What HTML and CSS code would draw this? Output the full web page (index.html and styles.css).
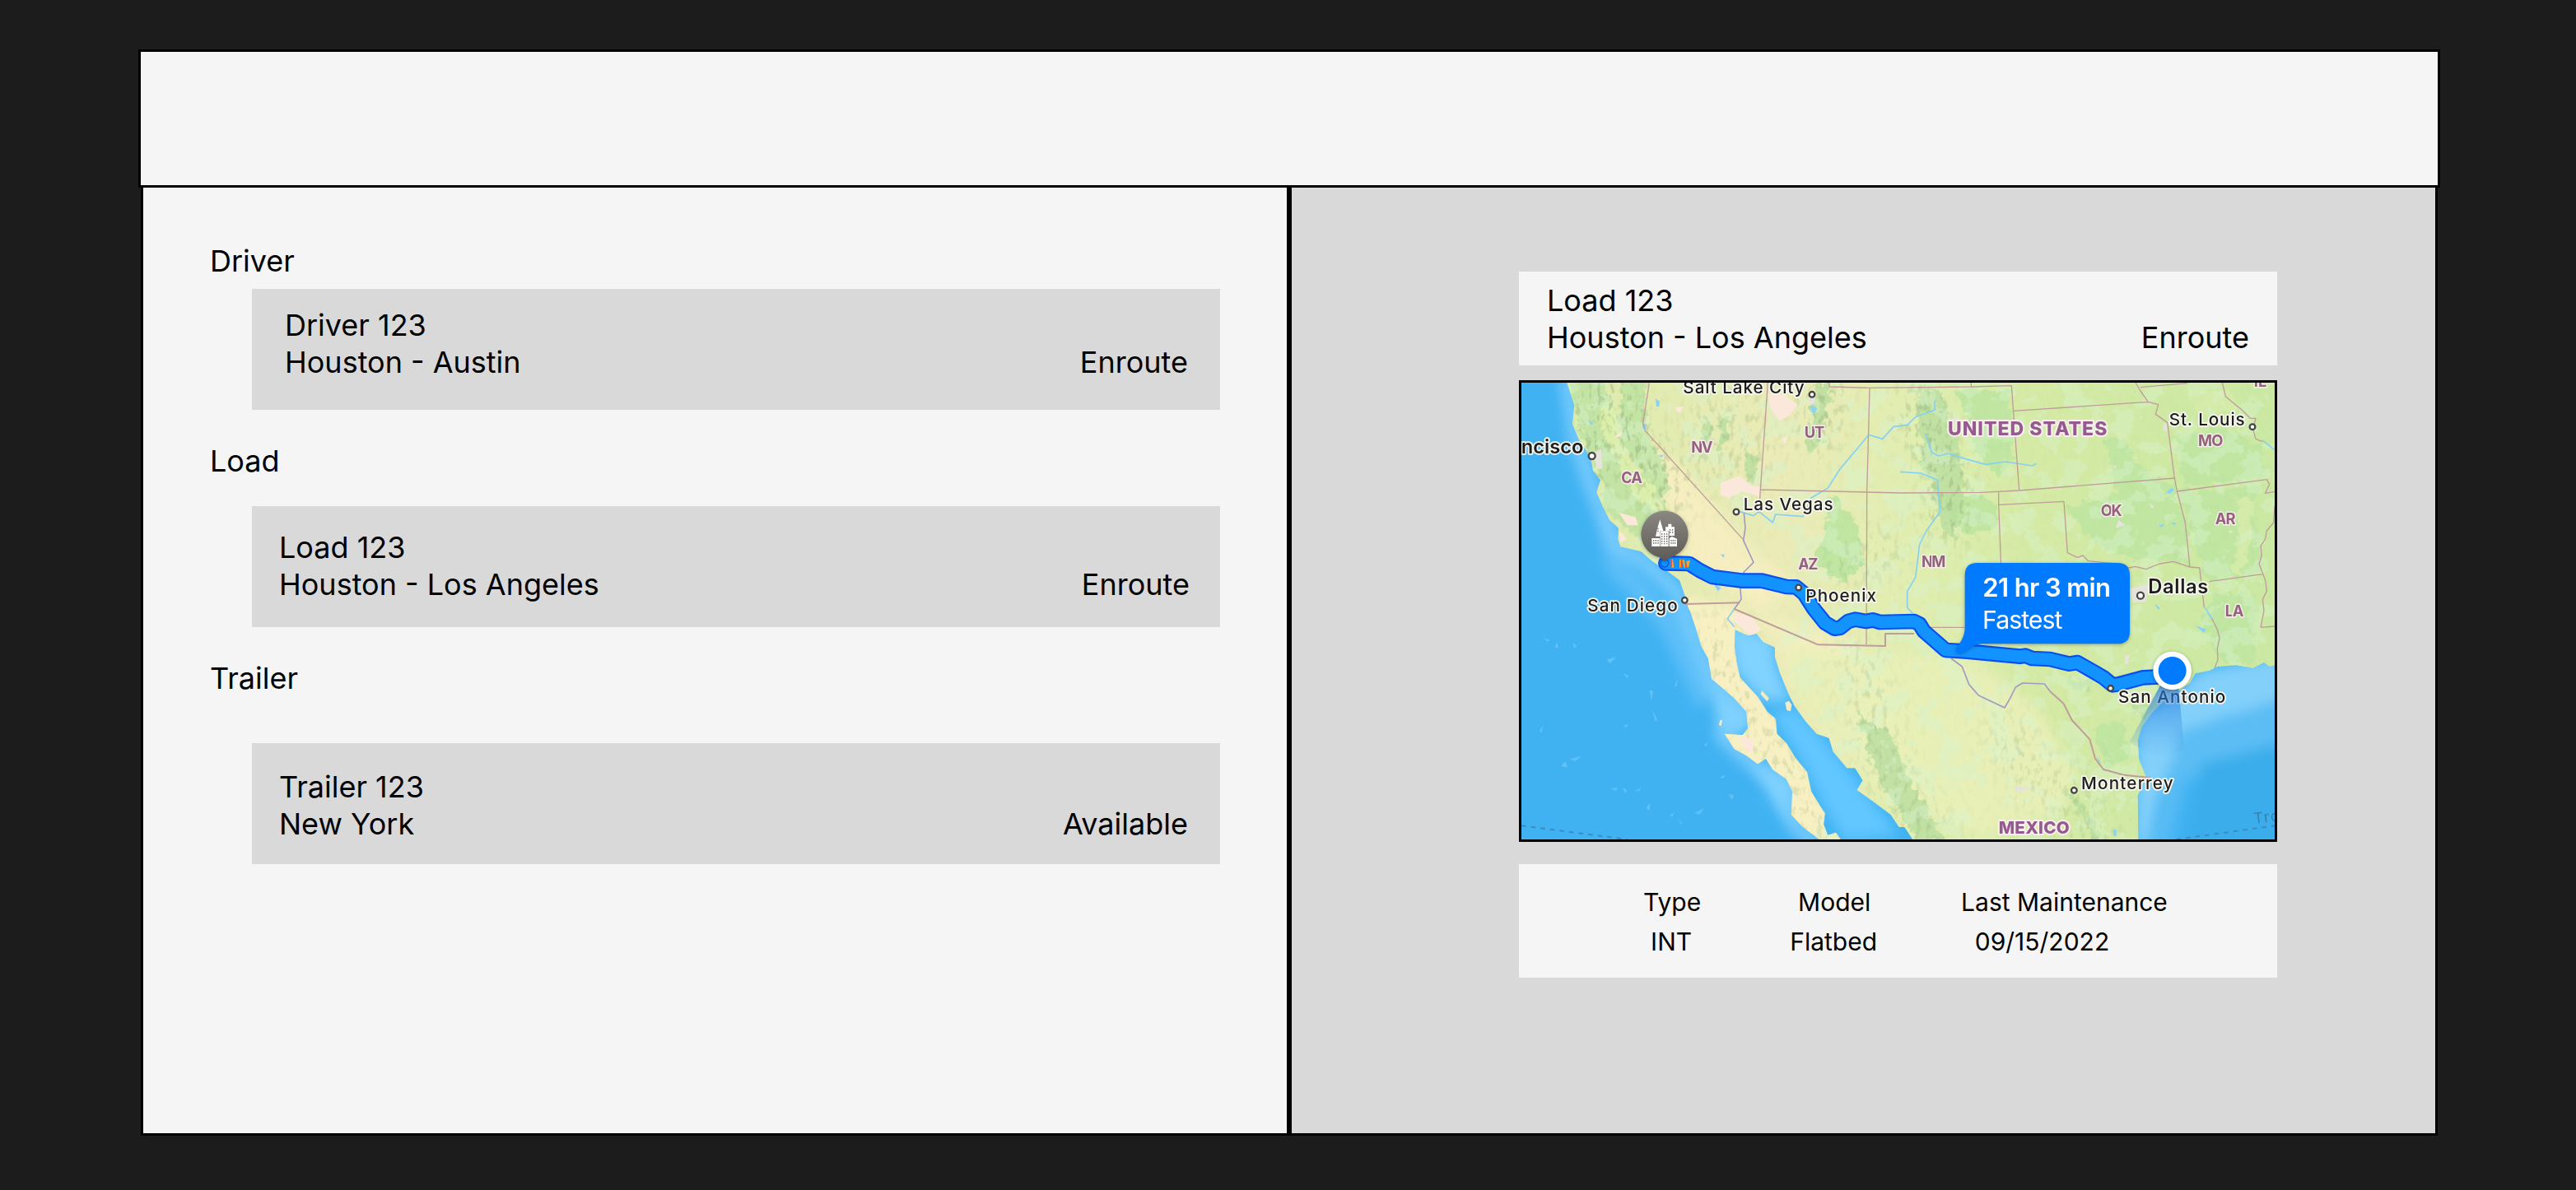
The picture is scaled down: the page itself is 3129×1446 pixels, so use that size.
FILE: index.html
```html
<!DOCTYPE html>
<html lang="en">
<head>
<meta charset="utf-8">
<title>Dispatch</title>
<link rel="stylesheet" href="styles.css">
</head>
<body>
<header class="topbar"></header>
<main class="panels">
  <section class="panel list-panel">
    <h2 class="group-title driver-title">Driver</h2>
    <article class="card driver-card">
      <div><p>Driver 123</p><p>Houston - Austin</p></div>
      <p class="status">Enroute</p>
    </article>
    <h2 class="group-title load-title">Load</h2>
    <article class="card load-card">
      <div><p>Load 123</p><p>Houston - Los Angeles</p></div>
      <p class="status">Enroute</p>
    </article>
    <h2 class="group-title trailer-title">Trailer</h2>
    <article class="card trailer-card">
      <div><p>Trailer 123</p><p>New York</p></div>
      <p class="status">Available</p>
    </article>
  </section>
  <section class="panel detail-panel">
    <article class="detail-head">
      <div><p>Load 123</p><p>Houston - Los Angeles</p></div>
      <p class="status">Enroute</p>
    </article>
    <div class="map">
      <svg class="map-art" viewBox="24 30 2745 1665" preserveAspectRatio="none">
        <defs>
          <path id="land" d="M190 30L200 60 217 110 210 180 235 240 262 280 280 320 285 350 312 385 298 430 320 480 345 530 378 560 376 600 385 628 460 645 500 680 530 700 560 720 600 750 625 820 632 850 640 865 660 925 680 990 705 1035 718 1110 765 1150 800 1180 845 1230 850 1290 830 1315 765 1310 800 1365 845 1390 885 1420 915 1400 940 1440 990 1475 1012 1520 1008 1605 1050 1650 1110 1695H1187L1170 1670 1140 1680 1125 1640 1130 1600 1110 1570 1080 1520 1065 1450 1040 1420 1020 1395 990 1345 955 1310 950 1255 920 1230 885 1175 820 1105 808 1050 800 990 802 930 850 952 880 945 905 975 948 995 948 1030 965 1085 1000 1170 1020 1210 1060 1265 1100 1310 1145 1325 1160 1375 1210 1435 1240 1435 1268 1480 1247 1515 1310 1560 1370 1605 1400 1650 1420 1650 1450 1695H2272L2270 1535 2300 1465 2275 1405 2270 1335 2285 1285 2320 1235 2350 1205 2390 1175 2460 1125 2480 1090 2530 1080 2560 1065 2630 1060 2690 1070 2730 1050 2750 1065 2769 1060V30Z"/>
          <clipPath id="landClip"><use href="#land"/></clipPath>
          <linearGradient id="landFill" x1="0" y1="0" x2="1" y2="0">
            <stop offset="0" stop-color="#dcebab"/><stop offset=".3" stop-color="#ebebb7"/><stop offset=".5" stop-color="#e0eeb0"/><stop offset=".65" stop-color="#d5eaa5"/><stop offset="1" stop-color="#cbe9a3"/>
          </linearGradient>
          <filter id="soft" x="-20%" y="-20%" width="140%" height="140%"><feGaussianBlur stdDeviation="22"/></filter>
          <filter id="wide" x="-50%" y="-50%" width="200%" height="200%"><feGaussianBlur stdDeviation="55"/></filter>
          <filter id="patches" x="0" y="0" width="100%" height="100%">
            <feTurbulence type="fractalNoise" baseFrequency=".011 .012" numOctaves="5" seed="7"/>
            <feColorMatrix values="0 0 0 0 .69  0 0 0 0 .89  0 0 0 0 .61  22 0 0 0 -11.8"/>
          </filter>
          <filter id="relief" x="0" y="0" width="100%" height="100%" color-interpolation-filters="sRGB">
            <feTurbulence type="fractalNoise" baseFrequency=".05 .028" numOctaves="3" seed="4"/>
            <feColorMatrix values="0 0 0 0 .5  0 0 0 0 .62  0 0 0 0 .42  0 0 5 0 -2.6"/>
          </filter>
          <filter id="jagged" x="-5%" y="-5%" width="110%" height="110%">
            <feTurbulence type="fractalNoise" baseFrequency=".03" numOctaves="3" seed="2"/>
            <feDisplacementMap in="SourceGraphic" scale="55" xChannelSelector="R" yChannelSelector="G"/>
            <feGaussianBlur stdDeviation="2"/>
          </filter>
          <mask id="inland"><rect x="24" y="30" width="2745" height="1665" fill="#fff"/><path filter="url(#soft)" fill="#222" d="M480 250L600 330 830 560 1080 700 1080 800 960 940 1040 1200 1180 1400 1100 1695 600 1400 570 700Z"/></mask>
          <mask id="ranges">
            <rect x="24" y="30" width="2745" height="1665" fill="#0c0c0c"/>
            <g filter="url(#wide)" fill="none" stroke="#fff" stroke-linecap="round" stroke-linejoin="round">
              <path stroke-width="110" d="M330 30L460 260 560 480M240 160L300 360M1480 80L1500 240 1580 380 1580 560M1130 60L1100 240"/>
              <path stroke-width="150" stroke="#777" d="M700 160V340M850 100V340M1250 1050L1380 1500 1520 1680M2020 1500L2110 1695M1800 1300L1900 1500M720 950L960 1400 1100 1640M1200 700L1360 640"/>
            </g>
          </mask>
          <linearGradient id="pinFill" x1="0" y1="0" x2="0" y2="1"><stop offset="0" stop-color="#8b8883"/><stop offset="1" stop-color="#5d5a56"/></linearGradient>
          <linearGradient id="beam" x1="0" y1="0" x2="0" y2="1"><stop offset="0" stop-color="#1a6fd8" stop-opacity=".8"/><stop offset=".35" stop-color="#2a80e0" stop-opacity=".5"/><stop offset="1" stop-color="#3f9bec" stop-opacity="0"/></linearGradient>
        </defs>

        <!-- water -->
        <rect x="24" y="30" width="2745" height="1665" fill="#40b2f2"/>
        <g filter="url(#soft)" fill="none" stroke="#7fcfff" stroke-linejoin="round">
          <path stroke-width="60" opacity=".8" d="M190 0L225 240 285 420 370 620 470 680 590 790 660 960 720 1120 850 1230 760 1320 880 1430 1000 1500 1020 1640 1110 1720"/>
          <path stroke-width="80" opacity=".45" d="M330 500L370 700 560 900 700 1200"/>
        </g>
        <g filter="url(#soft)">
          <path fill="#80d2ff" d="M770 900L940 960 960 1080 1010 1190 900 1190 800 1080ZM720 1130L850 1230 850 1290 740 1310ZM870 1420L1000 1480 1010 1650 940 1560Z"/>
          <path fill="#62c6ff" d="M930 1230L1030 1220 1160 1370 1260 1500 1400 1680 1200 1700 1130 1580 1040 1400Z"/>
          <path fill="#83d0fa" d="M2270 1250L2400 1170 2500 1080 2800 1030V1200L2560 1250 2420 1340 2340 1560 2310 1720H2260Z"/>
          <path fill="#5cbdf4" d="M2420 1300L2800 1180V1360L2440 1480 2380 1720H2330Z"/>
          <path fill="#3badeb" d="M2500 1420L2800 1340V1720H2440Z"/>
        </g>
        <g fill="#77cbf8" opacity=".6">
          <path d="M105 960l22 8-8 7zM152 976l8 20h-14zM212 978l14 12-10 8zM335 1040l34-10-22 24zM395 1090l20 8-6 10zM490 1150l14 4-6 38zM395 1280l18-6-6 14zM168 1428l16-18 8 22zM200 1402l42-10-22 18zM348 1510l28-4-8 12zM392 1506l18 10-8 10zM438 1518l24-12-8 12zM655 1600l36-20-18 24zM565 1606l16-10-8 18zM478 1580l16-18-4 28zM594 1618l16 18-4 4zM746 1472l18-14v12zM778 1530l20 4-8 16zM690 1350l12-10-4 18zM90 1300l12-20-4 26zM500 1220l20 40-8 4zM580 1140l14-32-4 26z"/>
        </g>

        <!-- land and terrain -->
        <use href="#land" fill="url(#landFill)"/>
        <g clip-path="url(#landClip)">
          <g filter="url(#soft)">
            <path fill="#f6eec0" d="M480 250L600 330 830 600 1030 780 900 860 640 700 570 560Z"/>
            <path fill="#f8f0c2" d="M590 800L820 850 840 960 960 1230 1200 1695H1000L960 1500 720 1400 620 1000Z"/>
            <path fill="#f4efc0" opacity=".8" d="M860 850L1270 985 1000 1160 960 1000ZM1060 1230L1180 1340 1200 1420 1120 1310Z"/>
            <path fill="#e9f0b8" opacity=".9" d="M1000 1000L1650 1030 1900 1200 2050 1450 2000 1600 1700 1695 1300 1500 1000 1150Z"/>
          </g>
          <g filter="url(#jagged)">
            <path fill="#bee3a2" opacity=".85" d="M190 10H320L350 110 330 240 420 420 500 490 560 480 590 560 500 620 400 560 310 480 320 400 250 250ZM380 20H480L470 180 560 380 540 480 470 380 380 220Z"/>
            <path fill="#dcefaa" d="M330 100L370 130 370 200 430 340 500 400 520 510 430 440 350 270 310 190Z"/>
            <path fill="#c0e6a2" d="M2150 230L2230 250 2300 360 2400 400 2450 560 2450 690 2300 680 2160 640 2060 560 2010 480 2200 440 2170 330ZM2420 430L2740 400 2680 460 2720 600 2720 720 2520 760ZM2400 230L2560 190 2720 260 2730 380 2440 410ZM2110 1290L2210 1260 2250 1400 2150 1440ZM2560 800H2700V1040L2580 1050 2500 900ZM1160 440L1240 540 1270 690 1200 760 1090 690ZM1600 50L1800 60 1820 300 1760 380 1680 280 1640 150ZM1560 440L1740 450 1760 560 1640 580 1580 540Z"/>
            <path fill="#b9dd9f" opacity=".8" d="M1470 60H1560L1620 300 1640 400 1600 600 1560 560 1480 300ZM1100 30H1150L1120 240 1070 300 1060 240ZM1240 1230L1380 1320 1440 1480 1500 1560 1560 1695H1460L1330 1480ZM2020 1520L2060 1540 2140 1695H2110ZM840 260L880 300 870 400 840 380ZM750 150L780 150 770 260 740 280ZM690 170L720 180 700 280 670 260ZM2020 1105L2100 1110 2100 1150 2030 1150ZM2240 1210L2330 1190 2290 1260Z"/>
            <path fill="#d5ebaa" d="M2630 450L2690 460 2680 600 2650 740 2610 720 2640 600ZM2440 60L2600 50 2640 130 2500 150Z"/>
          </g>
          <g mask="url(#inland)"><rect x="24" y="30" width="2745" height="1665" filter="url(#patches)" opacity=".42"/></g>
          <g mask="url(#ranges)"><rect x="24" y="30" width="2745" height="1665" filter="url(#relief)" opacity=".5"/></g>
          <g fill="#fbe8da">
            <path d="M925 70L985 75 1030 110 1000 150 965 170 930 120ZM750 395L820 370 860 405 895 410 890 445 830 425 780 450 750 440ZM800 870L860 880 900 930 860 955 800 900ZM380 505L440 520 450 550 410 550ZM380 570L410 600 385 612ZM820 1320L870 1330 865 1385 830 1350ZM580 120L615 118 600 142ZM360 230L390 205 388 225ZM975 235L995 222 985 260Z"/>
          </g>
          <g fill="#e6e3dc">
            <path d="M285 290L315 270 320 345 300 340ZM1070 80L1095 85 1090 110 1075 105ZM1590 160L1615 155 1610 180ZM2200 530L2225 550 2190 560ZM2240 780L2310 765 2300 830 2250 830ZM2365 180H2378V205H2362ZM2225 1025L2240 1020 2235 1055 2222 1060ZM2310 470L2330 480 2322 490ZM2600 570h18l-8 10zM2180 330l14 4-4 10zM1820 1500l60 8-20 10-34 2z"/>
          </g>
          <path fill="#86d2fb" d="M512 88l16 10-2 20-10-2zM466 178l14 4-4 18-10-4zM268 165l18 14-10 4zM525 295l18-2-8 10zM1080 115l22 8-12 20-8-6zM750 655l14 2-4 12zM726 765l26 12-12 14zM2375 430l16-16 12 6-16 14zM2345 550l22-4-8 12zM2395 540l16 2-10 8zM2330 835l22 18-8 4zM2480 915l40 14-10 12zM2180 1660h12v22h-10zM2120 1390l12 18v12z"/>
        </g>
        <path fill="#f5ebbf" d="M900 1152l26 28-6 12-24-26zM985 1196l14-6 10 14-4 24-14-4zM748 1260h8l-4 22-8-4z"/>

        <!-- rivers -->
        <g class="river">
          <path d="M820 500L870 515 890 500 940 540 950 510 1050 518 1080 450 1140 415 1185 345 1240 280 1290 220 1340 235 1380 190 1430 185 1460 155 1530 130V95"/>
          <path d="M1495 215L1520 285 1545 297 1580 288 1640 307 1715 328 1790 318 1885 333 1900 325"/>
          <path d="M1405 355L1480 360 1540 385 1550 500 1500 570 1475 620 1460 740 1430 790V850L1450 870"/>
          <path d="M800 855L775 890 800 920M2515 850L2540 890M2725 240L2769 275"/>
        </g>
        <!-- state and national borders -->
        <g class="border">
          <path d="M490 30L467 180 475 205 835 605M922 30L895 420 890 505M895 420L1410 432 1700 430 1838 423 2404 378M1145 30L1147 45 1293 49 1283 432 1281 985M1293 49L1663 45 1810 41 1838 423M1663 30V45M1818 133L2308 100M2262 30L2280 60 2308 100 2345 110 2335 145 2378 175 2404 378 2413 425 2443 540 2460 702 2495 705 2512 850M2280 47L2450 32M2413 426L2740 383 2750 400 2735 433 2769 427M1763 430V475L1772 700M1763 475L2001 463 2014 650 2050 667 2070 660 2090 680 2140 685 2200 690 2240 705 2260 700 2300 710 2350 690 2400 682 2460 702M2530 755L2725 728M1510 922H1640M2718 922L2769 918"/>
          <path d="M2769 480L2765 540 2740 570 2735 600 2718 625 2722 660 2712 690 2735 750 2740 790 2725 820 2730 860 2718 922M2540 890L2560 930 2568 960 2560 1000 2562 1040 2550 1070M2578 30L2590 80 2650 130 2680 160 2700 160 2690 200 2700 235 2725 245"/>
          <path stroke-width="6" d="M620 837L820 832M800 855L1105 985 1350 990V945H1455M1950 1155L2000 1200 2030 1260 2095 1330 2115 1400 2145 1440 2220 1460 2315 1470"/>
        </g>
        <path class="border river-border" d="M835 505L840 560 833 605 870 685 835 720 820 760 825 820 800 855M1590 1035L1630 1065 1655 1130 1690 1170 1785 1215 1805 1180 1825 1140 1850 1125 1930 1128 1950 1155"/>
        <path class="tropic" d="M24 1645L410 1695M2410 1695L2769 1645"/>

        <!-- route -->
        <g fill="none" stroke-linecap="round" stroke-linejoin="round">
          <path stroke="#074ff0" stroke-width="56" d="M550 688L635 690 675 715 720 738 830 752 900 752 990 774 1025 775 1055 800 1090 855 1130 905 1165 926 1185 924 1215 900 1240 893 1280 900 1305 895 1330 903 1455 900 1475 910 1490 935 1570 1005 1650 1010 1840 1028 1860 1025 1885 1035 1950 1038 2020 1055 2050 1050 2120 1090 2145 1105 2178 1132 2200 1129 2290 1105 2390 1100"/>
          <path stroke="#1293ff" stroke-width="43" d="M550 688L635 690 675 715 720 738 830 752 900 752 990 774 1025 775 1055 800 1090 855 1130 905 1165 926 1185 924 1215 900 1240 893 1280 900 1305 895 1330 903 1455 900 1475 910 1490 935 1570 1005 1650 1010 1840 1028 1860 1025 1885 1035 1950 1038 2020 1055 2050 1050 2120 1090 2145 1105 2178 1132 2200 1129 2290 1105 2390 1100"/>
        </g>
        <path fill="#f5a81c" d="M568 672h8l4 32h-9zM600 674h5v30h-5zM610 676h8l4 28h-5zM625 680l14-3-6 26h-6z"/>
        <path fill="#e8503a" d="M568 672h5v30l-5-8zM606 676h3v26h-3zM622 690h5v14h-5z"/>

        <!-- place names -->
        <g class="state">
          <text x="388" y="397" textLength="77">CA</text><text x="643" y="286" textLength="78">NV</text>
          <text x="1055" y="230" textLength="74">UT</text><text x="1033" y="711" textLength="72">AZ</text>
          <text x="1482" y="702" textLength="88">NM</text><text x="2135" y="516" textLength="78">OK</text>
          <text x="2490" y="262" textLength="91">MO</text><text x="2552" y="547" textLength="75">AR</text>
          <text x="2588" y="882" textLength="68">LA</text><text x="2693" y="45" textLength="47">IL</text>
        </g>
        <g class="country">
          <text x="1578" y="222" textLength="580">UNITED STATES</text><text x="1763" y="1674" font-size="62" textLength="258">MEXICO</text>
        </g>
        <g class="city">
          <text x="613" y="68" textLength="442">Salt Lake City</text><text x="833" y="495" textLength="327">Las Vegas</text>
          <text x="1060" y="828" textLength="257">Phoenix</text><text x="265" y="863" textLength="328">San Diego</text>
          <text x="2384" y="186" textLength="276">St. Louis</text><text x="2199" y="1198" textLength="391">San Antonio</text>
          <text x="2064" y="1512" textLength="335">Monterrey</text>
        </g>
        <g class="city major">
          <text x="250" y="288" text-anchor="end">San Francisco</text><text x="2308" y="798" textLength="219">Dallas</text>
        </g>
        <text class="tropic-name" x="2695" y="1637" transform="rotate(-7 2695 1637)">Tropic</text>
        <g class="town">
          <circle cx="1083" cy="73" r="10"/><circle cx="281" cy="297" r="12"/><circle cx="807" cy="501" r="10"/>
          <circle cx="1034" cy="777" r="10"/><circle cx="619" cy="823" r="10"/><circle cx="2688" cy="191" r="10"/>
          <circle cx="2280" cy="806" r="12"/><circle cx="2171" cy="1144" r="10"/><circle cx="2038" cy="1516" r="10"/>
        </g>

        <!-- origin: current location -->
        <path fill="url(#beam)" d="M2370 1100L2240 1340 2340 1400 2440 1370 2415 1100Z"/>
        <circle class="lifted" cx="2396" cy="1080" r="70" fill="#fff"/>
        <circle cx="2396" cy="1080" r="51" fill="#007aff"/>

        <!-- destination pin -->
        <circle cx="546" cy="688" r="14" fill="#1196ff" stroke="#0a5fe0" stroke-width="5"/>
        <path class="lifted" fill="url(#pinFill)" d="M546 497a86 86 0 0 1 24 168.500Q552 671 546 684 540 671 522 665.500A86 86 0 0 1 546 497Z"/>
        <g fill="#fff">
          <path d="M529 529l12 41h-12v20h-16l8-34z"/>
          <path d="M549 556h10v-11h12v11h11v32h-19v-18h-14z"/>
          <path d="M530 571h30v56h-30zM499 597h29v30h-29zM563 597l9-6 19 8v28h-28z"/>
        </g>
        <path class="windows" d="M536 579v40M545 579v40M554 579v40M506 603v18M514 603v18M522 603v18M570 603v18M577 603v18M584 603v18M566 564v16M575 564v16M522 560v20"/>

        <!-- travel time callout -->
        <path class="lifted" fill="#007aff" d="M1685 687H2196Q2241 687 2241 732V937Q2241 982 2196 982H1700Q1675 984 1650 1002 1625 1020 1612 1014 1602 1008 1618 985 1640 955 1640 925V732Q1640 687 1685 687Z"/>
        <g class="callout">
          <text class="time" x="1705" y="811" textLength="467">21 hr 3 min</text>
          <text x="1704" y="927" textLength="292">Fastest</text>
        </g>
      </svg>
    </div>
    <div class="specs">
      <dl><dt>Type</dt><dd>INT</dd></dl>
      <dl><dt>Model</dt><dd>Flatbed</dd></dl>
      <dl class="maintenance"><dt>Last Maintenance</dt><dd>09/15/2022</dd></dl>
    </div>
  </section>
</main>
</body>
</html>
```
FILE: styles.css
```css
* { box-sizing: border-box; }
body, h2, p, dl, dd { margin: 0; }
body {
  min-height: 1446px;
  padding: 60px 165px 0 168px;
  background: #1c1c1c;
  color: #000;
  font: 400 36px/45px Inter, "Liberation Sans", sans-serif;
}
.topbar { height: 168px; background: #f5f5f5; border: 3px solid #000; }
.panels { display: grid; grid-template-columns: 1395px 1395px; margin: 0 3px; height: 1152px; }
.panel { border: 3px solid #000; border-top: 0; }
.list-panel { background: #f5f5f5; padding: 67px 81px 0 81px; }
.detail-panel { background: #d9d9d9; padding: 102px 192px 0 276px; }

.group-title { font: inherit; }
.driver-title { margin-bottom: 11px; }
.load-title { margin: 40px 0 32px; }
.trailer-title { margin: 40px 0 56px; }
.card {
  display: flex;
  justify-content: space-between;
  height: 147px;
  margin-left: 51px;
  background: #d9d9d9;
}
.status { margin-top: 45px; }
.driver-card { padding: 22px 39px 0 40px; }
.load-card { padding: 28px 37px 0 33px; }
.trailer-card { padding: 31px 39px 0 33px; }

.detail-head {
  display: flex;
  justify-content: space-between;
  height: 114px;
  padding: 13px 34px 0 34px;
  background: #f5f5f5;
}
.map { height: 561px; margin: 18px 0 27px; border: 3px solid #000; overflow: hidden; }
.map-art { display: block; width: 915px; height: 555px; font-family: Inter, "Liberation Sans", sans-serif; }
.specs {
  display: flex;
  height: 138px;
  padding: 22px 0 0 151px;
  background: #f5f5f5;
  font-size: 30px;
  line-height: 48px;
  text-align: center;
}
.specs dl { margin-right: 108px; }
.specs dd { padding-right: 2px; }
.specs .maintenance { margin: 0 0 0 -8px; }
.specs .maintenance dd { padding-right: 54px; }

.river { fill: none; stroke: #86d0f3; stroke-width: 5; stroke-linejoin: round; }
.border { fill: none; stroke: #bf9d9b; stroke-width: 4; stroke-linejoin: round; }
.river-border { stroke: #a39ac0; stroke-width: 5; }
.tropic { fill: none; stroke: #3b8cc0; stroke-width: 6; stroke-dasharray: 17 18; }
.tropic-name { font-size: 54px; letter-spacing: 5px; fill: #3b7fac; }
.state text, .country text, .city text { paint-order: stroke; stroke-linejoin: round; }
.state text { font-size: 55px; font-weight: 700; fill: #96607f; stroke: #f3efe6; stroke-width: 9px; }
.country text { font-weight: 800; fill: #965a90; stroke: #f6f2ea; stroke-width: 12px; }
.country { font-size: 69px; }
.city { font-size: 62px; font-weight: 500; fill: #1e1e1e; }
.city text { stroke: #f7f6ef; stroke-width: 11px; }
.major { font-size: 71px; font-weight: 600; }
.town circle { fill: #fff; stroke: #464646; stroke-width: 7; }
.lifted { filter: drop-shadow(0 3px 6px rgba(0, 0, 0, .3)); }
.windows { fill: none; stroke: #77746f; stroke-width: 4; stroke-dasharray: 5 4; }
.callout { font-size: 91px; fill: #fff; }
.time { font-size: 93px; font-weight: 600; }
```
